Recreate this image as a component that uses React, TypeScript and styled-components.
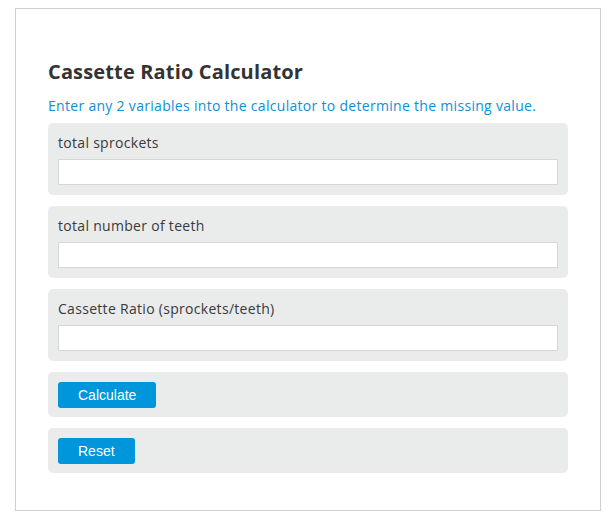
import React from "react";
import styled, { createGlobalStyle } from "styled-components";

const GlobalStyle = createGlobalStyle`
  body {
    margin: 0;
    background: #ffffff;
    font-family: "Open Sans", "Noto Sans", sans-serif;
  }
`;

const Page = styled.div`
  padding: 8px 15px;
`;

const Card = styled.div`
  width: 586px;
  box-sizing: border-box;
  border: 1px solid #cfcfcf;
  padding: 49px 32px 37px;
`;

const Title = styled.h2`
  margin: 0;
  font-size: 20px;
  line-height: 28px;
  font-weight: 700;
  letter-spacing: 0.15px;
  color: #333333;
`;

const Intro = styled.p`
  margin: 10px 0 7px;
  font-size: 14px;
  line-height: 20px;
  letter-spacing: 0.3px;
  color: #0d90d6;
`;

const Stack = styled.div`
  display: flex;
  flex-direction: column;
  gap: 11px;
  width: 520px;
`;

const Panel = styled.div<{ $compact?: boolean }>`
  background: #eaebeb;
  border-radius: 5px;
  padding: ${(p) => (p.$compact ? "10px 10px 9px" : "10px 10px 10px")};
  display: flex;
  flex-direction: column;
  align-items: flex-start;
`;

const Label = styled.label`
  font-size: 14px;
  line-height: 20px;
  letter-spacing: 0.3px;
  color: #3a3a3a;
  margin-bottom: 6px;
`;

const Input = styled.input`
  box-sizing: border-box;
  width: 100%;
  height: 26px;
  margin: 0;
  border: 1px solid #d6d6d6;
  background: #ffffff;
  outline: none;
`;

const Button = styled.button`
  height: 26px;
  padding: 0 20px;
  border: none;
  border-radius: 3px;
  background: #0096db;
  color: #ffffff;
  font-family: "Liberation Sans", Arial, sans-serif;
  font-size: 14px;
  cursor: pointer;
`;

const fields = [
  "total sprockets",
  "total number of teeth",
  "Cassette Ratio (sprockets/teeth)",
];

export default function App() {
  return (
    <>
      <GlobalStyle />
      <Page>
        <Card>
          <Title>Cassette Ratio Calculator</Title>
          <Intro>
            Enter any 2 variables into the calculator to determine the missing
            value.
          </Intro>
          <Stack>
            {fields.map((f) => (
              <Panel key={f}>
                <Label>{f}</Label>
                <Input type="text" />
              </Panel>
            ))}
            <Panel $compact>
              <Button>Calculate</Button>
            </Panel>
            <Panel $compact>
              <Button>Reset</Button>
            </Panel>
          </Stack>
        </Card>
      </Page>
    </>
  );
}
